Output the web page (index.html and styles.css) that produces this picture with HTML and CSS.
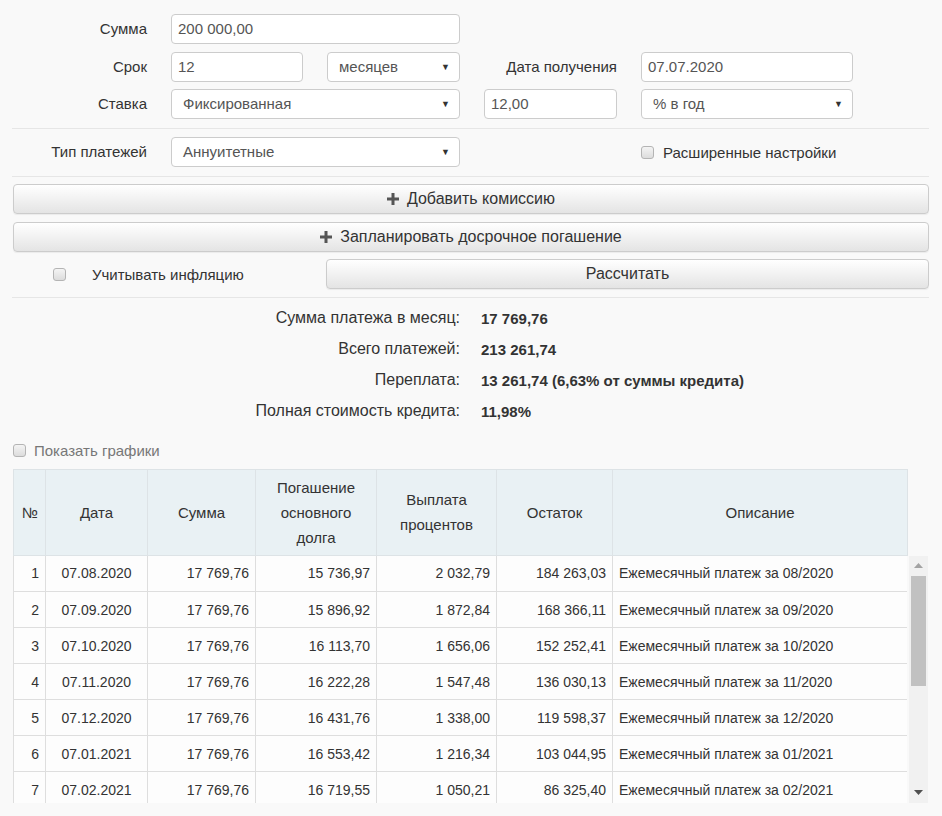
FILE: index.html
```html
<!DOCTYPE html>
<html lang="ru">
<head>
<meta charset="utf-8">
<title>Кредитный калькулятор</title>
<link rel="stylesheet" href="styles.css">
</head>
<body>
<div class="page">
  <div class="form-grid">
    <div class="lbl">Сумма</div>
    <div class="field span2">200 000,00</div>
    <div></div><div></div>

    <div class="lbl">Срок</div>
    <div class="field">12</div>
    <div class="field select">месяцев<span class="arr">▼</span></div>
    <div class="lbl">Дата получения</div>
    <div class="field">07.07.2020</div>

    <div class="lbl">Ставка</div>
    <div class="field select span2">Фиксированная<span class="arr">▼</span></div>
    <div class="field">12,00</div>
    <div class="field select">% в год<span class="arr">▼</span></div>
  </div>

  <div class="divider"></div>

  <div class="form-grid">
    <div class="lbl">Тип платежей</div>
    <div class="field select span2">Аннуитетные<span class="arr">▼</span></div>
    <div></div>
    <div class="check-line"><span class="cb"></span><span class="cb-text">Расширенные настройки</span></div>
  </div>

  <div class="divider d2"></div>

  <div class="btn-stack">
    <div class="btn"><svg class="plus" width="12" height="12" viewBox="0 0 12 12"><rect x="4.5" y="0" width="3" height="12" fill="#555"/><rect x="0" y="4.5" width="12" height="3" fill="#555"/></svg>Добавить комиссию</div>
    <div class="btn"><svg class="plus" width="12" height="12" viewBox="0 0 12 12"><rect x="4.5" y="0" width="3" height="12" fill="#555"/><rect x="0" y="4.5" width="12" height="3" fill="#555"/></svg>Запланировать досрочное погашение</div>
    <div class="calc-row">
      <div class="infl"><span class="cb"></span><span class="infl-text">Учитывать инфляцию</span></div>
      <div class="btn grow">Рассчитать</div>
    </div>
  </div>

  <div class="divider d3"></div>

  <div class="results">
    <div class="r-lbl">Сумма платежа в месяц:</div><div class="r-val">17 769,76</div>
    <div class="r-lbl">Всего платежей:</div><div class="r-val">213 261,74</div>
    <div class="r-lbl">Переплата:</div><div class="r-val">13 261,74 (6,63% от суммы кредита)</div>
    <div class="r-lbl">Полная стоимость кредита:</div><div class="r-val">11,98%</div>
  </div>

  <div class="charts"><span class="cb"></span><span class="charts-text">Показать графики</span></div>

  <div class="grid-head">
    <table class="tbl">
      <colgroup><col class="c1"><col class="c2"><col class="c3"><col class="c4"><col class="c5"><col class="c6"><col class="c7"></colgroup>
      <tr><th>№</th><th>Дата</th><th>Сумма</th><th>Погашение основного долга</th><th>Выплата процентов</th><th>Остаток</th><th>Описание</th></tr>
    </table>
  </div>
  <div class="grid-body">
    <div class="rows">
      <table class="tbl">
        <colgroup><col class="c1"><col class="c2"><col class="c3"><col class="c4"><col class="c5"><col class="c6"><col class="c7"></colgroup>
        <tr><td class="r">1</td><td class="c">07.08.2020</td><td class="r">17 769,76</td><td class="r">15 736,97</td><td class="r">2 032,79</td><td class="r">184 263,03</td><td>Ежемесячный платеж за 08/2020</td></tr>
        <tr><td class="r">2</td><td class="c">07.09.2020</td><td class="r">17 769,76</td><td class="r">15 896,92</td><td class="r">1 872,84</td><td class="r">168 366,11</td><td>Ежемесячный платеж за 09/2020</td></tr>
        <tr><td class="r">3</td><td class="c">07.10.2020</td><td class="r">17 769,76</td><td class="r">16 113,70</td><td class="r">1 656,06</td><td class="r">152 252,41</td><td>Ежемесячный платеж за 10/2020</td></tr>
        <tr><td class="r">4</td><td class="c">07.11.2020</td><td class="r">17 769,76</td><td class="r">16 222,28</td><td class="r">1 547,48</td><td class="r">136 030,13</td><td>Ежемесячный платеж за 11/2020</td></tr>
        <tr><td class="r">5</td><td class="c">07.12.2020</td><td class="r">17 769,76</td><td class="r">16 431,76</td><td class="r">1 338,00</td><td class="r">119 598,37</td><td>Ежемесячный платеж за 12/2020</td></tr>
        <tr><td class="r">6</td><td class="c">07.01.2021</td><td class="r">17 769,76</td><td class="r">16 553,42</td><td class="r">1 216,34</td><td class="r">103 044,95</td><td>Ежемесячный платеж за 01/2021</td></tr>
        <tr><td class="r">7</td><td class="c">07.02.2021</td><td class="r">17 769,76</td><td class="r">16 719,55</td><td class="r">1 050,21</td><td class="r">86 325,40</td><td>Ежемесячный платеж за 02/2021</td></tr>
      </table>
    </div>
    <div class="vscroll">
      <div class="sb-btn"><svg width="9" height="5" viewBox="0 0 9 5"><polygon points="0,5 4.5,0 9,5" fill="#a3a3a3"/></svg></div>
      <div class="sb-track">
        <div class="sb-thumb"></div>
      </div>
      <div class="sb-btn"><svg width="9" height="5" viewBox="0 0 9 5"><polygon points="0,0 4.5,5 9,0" fill="#505050"/></svg></div>
    </div>
  </div>
</div>
</body>
</html>
```
FILE: styles.css
```css
html, body {
  margin: 0;
  padding: 0;
  background: #f9f9f9;
}
body {
  font-family: "Liberation Sans", Arial, sans-serif;
  font-size: 15px;
  color: #333;
}
.page {
  width: 916px;
  padding: 14px 0 0 13px;
}
.form-grid {
  display: grid;
  grid-template-columns: 134px 132px 133px 133px 212px;
  grid-auto-rows: 30px;
  column-gap: 24px;
  row-gap: 7.5px;
  align-items: center;
}
.lbl {
  text-align: right;
  line-height: 30px;
}
.field {
  box-sizing: border-box;
  height: 30px;
  line-height: 28px;
  padding: 0 6px;
  background: #fff;
  border: 1px solid #ccc;
  border-radius: 4px;
  color: #555;
  white-space: nowrap;
  display: flex;
  align-items: center;
}
.select {
  padding-left: 11px;
  justify-content: space-between;
}
.arr {
  font-size: 9px;
  color: #333;
  margin-right: 3px;
}
.span2 {
  grid-column: span 2;
}
.divider {
  height: 1px;
  background: #e6e6e6;
  margin: 9px 0 8px -1px;
  width: 917px;
}
.d2 {
  margin: 9px 0 7px -1px;
}
.d3 {
  margin: 8px 0 4.5px -1px;
}
.check-line {
  display: flex;
  align-items: center;
}
.cb {
  box-sizing: border-box;
  display: inline-block;
  width: 13px;
  height: 13px;
  border: 1px solid #b4b4b4;
  border-radius: 3px;
  background: linear-gradient(#f4f4f4, #dcdcdc);
  flex: none;
}
.cb-text {
  margin-left: 9px;
}
.btn-stack {
  display: flex;
  flex-direction: column;
  gap: 7.5px;
}
.btn {
  box-sizing: border-box;
  height: 30px;
  border: 1px solid #ccc;
  border-radius: 4px;
  background: linear-gradient(#ffffff, #e4e4e4);
  box-shadow: 0 1px 1px rgba(0,0,0,0.06);
  display: flex;
  align-items: center;
  justify-content: center;
  color: #333;
  font-size: 16px;
}
.plus {
  margin-right: 8px;
}
.calc-row {
  display: flex;
  align-items: center;
}
.infl {
  width: 313px;
  display: flex;
  align-items: center;
  padding-left: 40px;
  box-sizing: border-box;
}
.infl-text {
  margin-left: 26px;
}
.grow {
  flex: 1;
}
.results {
  display: grid;
  grid-template-columns: 447px auto;
  column-gap: 21px;
  grid-auto-rows: 31px;
  align-items: center;
}
.r-lbl {
  text-align: right;
  font-size: 16px;
}
.r-val {
  font-weight: bold;
  font-size: 15px;
}
.charts {
  display: flex;
  align-items: center;
  margin-top: 14px;
  height: 20px;
}
.charts-text {
  margin-left: 8px;
  color: #777;
}
.grid-head {
  margin-top: 8px;
  width: 894px;
}
.tbl {
  width: 894px;
  table-layout: fixed;
  border-collapse: collapse;
  font-size: 14px;
}
.c1 { width: 32px; }
.c2 { width: 102px; }
.c3 { width: 108px; }
.c4 { width: 121px; }
.c5 { width: 120px; }
.c6 { width: 116px; }
.c7 { width: 295px; }
.tbl th {
  background: #e9f1f4;
  font-weight: normal;
  font-size: 15px;
  line-height: 25px;
  padding: 5px 8px;
  border: 1px solid #dde3e6;
  text-align: center;
  vertical-align: middle;
  color: #333;
}
.grid-body {
  display: flex;
  height: 247px;
}
.rows {
  width: 894px;
  height: 247px;
  overflow: hidden;
}
.tbl td {
  background: #fdfdfd;
  border: 1px solid #dedede;
  border-top: none;
  height: 36px;
  padding: 0 6px;
  line-height: 20px;
  box-sizing: border-box;
  white-space: nowrap;
  color: #333;
}
.tbl td.r { text-align: right; }
.tbl td.c { text-align: center; }
.vscroll {
  width: 19px;
  margin-left: 2px;
  background: #f1f1f1;
  display: flex;
  flex-direction: column;
}
.sb-btn {
  height: 20px;
  display: flex;
  align-items: center;
  justify-content: center;
  flex: none;
}
.sb-track {
  flex: 1;
  padding: 0 2px;
}
.sb-thumb {
  height: 110px;
  background: #c1c1c1;
}
```
